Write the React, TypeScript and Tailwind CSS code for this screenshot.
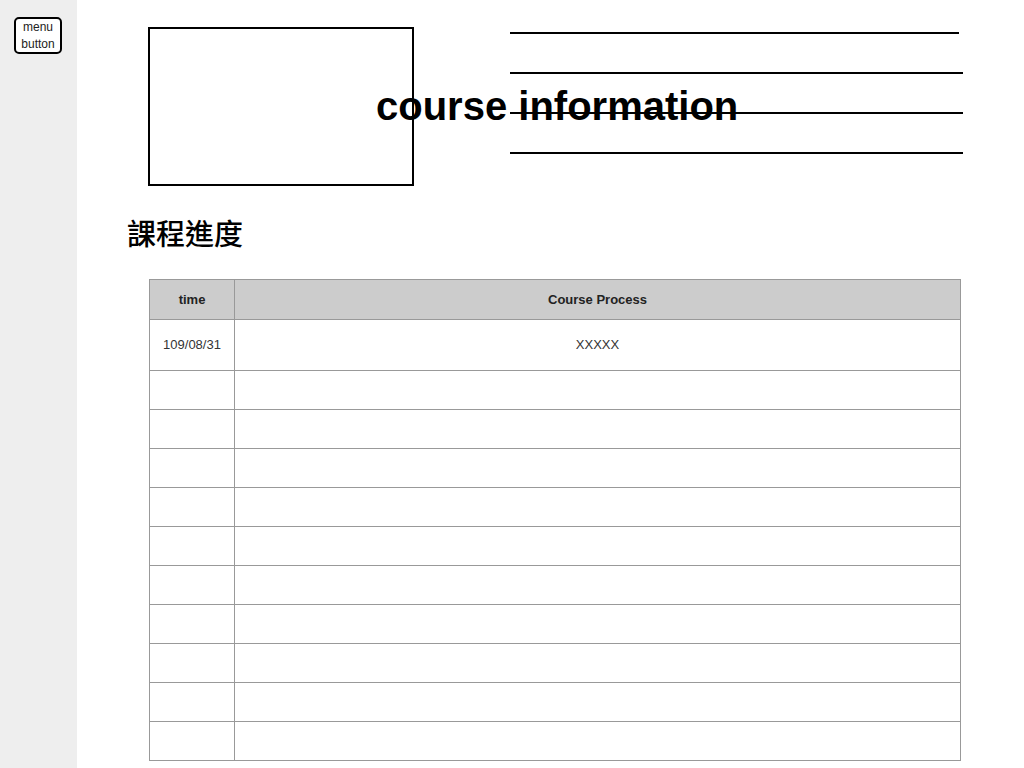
import React from "react";

const rows = Array.from({ length: 10 }, (_, i) => i);

const App = () => {
  return (
    <div className="flex min-h-[768px] w-[1024px] bg-white font-['Liberation_Sans',Arial,sans-serif] text-black">
      <aside className="w-[77px] shrink-0 bg-[#eeeeee] pl-[14px] pt-[17px]">
        <button className="flex h-[37px] w-[48px] flex-col items-center justify-center rounded-[5px] border-2 border-black bg-white text-[12px] leading-[17px] text-[#222222]">
          <span>menu</span>
          <span>button</span>
        </button>
      </aside>

      <main className="relative flex-1 pl-[71px]">
        <div className="flex pt-[27px]">
          <div className="h-[159px] w-[266px] border-2 border-black" />
          <div className="ml-[96px] flex flex-col pt-[5px]">
            <div className="h-[2px] w-[449px] bg-black" />
            <div className="mt-[38px] h-[2px] w-[453px] bg-black" />
            <div className="mt-[38px] h-[2px] w-[453px] bg-black" />
            <div className="mt-[38px] h-[2px] w-[453px] bg-black" />
          </div>
        </div>

        <h1 className="absolute left-[299px] top-[83px] text-[40px] font-bold leading-[46px]">
          course information
        </h1>

        <h2 className="ml-[-21px] mt-[26px] font-['Noto_Sans_CJK_TC',sans-serif] text-[29px] font-medium leading-[40px]">
          課程進度
        </h2>

        <table className="ml-[1px] mt-[27px] w-[812px] border-collapse text-[13px] text-[#333333]">
          <thead>
            <tr className="h-[40px] bg-[#cccccc]">
              <th className="w-[85px] border border-[#999999] font-bold text-[#222222]">time</th>
              <th className="border border-[#999999] font-bold text-[#222222]">Course Process</th>
            </tr>
          </thead>
          <tbody>
            <tr className="h-[51px]">
              <td className="border border-[#999999] text-center">109/08/31</td>
              <td className="border border-[#999999] text-center">XXXXX</td>
            </tr>
            {rows.map((r) => (
              <tr key={r} className="h-[39px]">
                <td className="border border-[#999999]" />
                <td className="border border-[#999999]" />
              </tr>
            ))}
          </tbody>
        </table>
      </main>
    </div>
  );
};

export default App;
